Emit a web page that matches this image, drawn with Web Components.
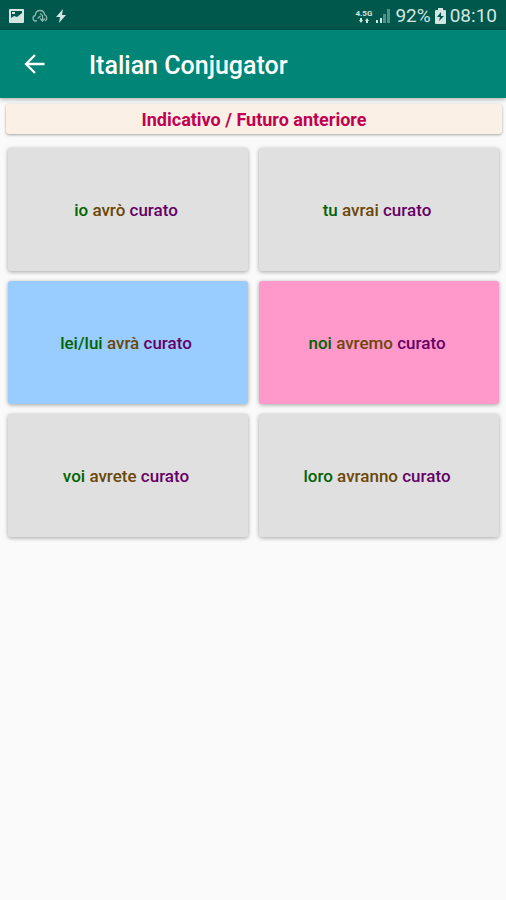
<!DOCTYPE html>
<html lang="en">
<head>
<meta charset="utf-8">
<meta name="viewport" content="width=device-width, initial-scale=1">
<title>Italian Conjugator</title>
<style>
  body {
    margin: 0;
    background: #fafafa;
    font-family: Roboto, "Liberation Sans", sans-serif;
  }
</style>
</head>
<body>
<conjugator-app></conjugator-app>

<script>
// Attach an open shadow root and fill it in.
const render = (host, html) => {
  host.attachShadow({mode: "open"}).innerHTML = `
    <style>
    :host, * { box-sizing: border-box; }
    h1, h2 { margin: 0; }
    </style>
    ${html}
  `;
};

// Phone status bar:
class StatusBar extends HTMLElement {
  connectedCallback() {
    render(this, `
      <style>
      :host {
        display: flex;
        align-items: center;
        justify-content: space-between;
        height: 30px;
        padding: 2px 9px 0 8px;
        background: #00574b;
        color: #d3e6e2;
        font-size: 19px;
        line-height: 24px;
      }

      div { display: flex; align-items: center; }
      .left { gap: 7px; }
      .right { gap: 4px; }
      svg { display: block; fill: currentColor; }

      .network {
        display: flex;
        flex-direction: column;
        align-items: center;
        font-size: 8px;
        font-weight: 700;
        line-height: 8px;
      }
      </style>

      <div class="left">
        <svg width="17" height="16" viewBox="0 0 17 16">
          <path fill-rule="evenodd" d="M2 1h13q1 0 1 1v12q0 1-1 1H2q-1 0-1-1V2q0-1 1-1zM3 3v7l3-2 3 1 5-4V3z"/>
          <path d="M4 4h3v2H4z"/>
        </svg>
        <svg width="16" height="14" viewBox="0 0 16 14" style="fill: none; stroke: #8bb7b0; stroke-width: 1.3">
          <path d="M5 12H3.500a2.800 2.800 0 0 1-.3-5.500C3.500 3 5.500 1.500 8 1.500s4.300 1.700 4.500 4.200c3 1 3 5.500.5 6.300"/>
          <path d="M5.500 9.500 8.500 7M8 4.500l2.500 2v5M8 9.500l2.500 2.500L13 9.500"/>
        </svg>
        <svg width="12" height="16" viewBox="0 0 12 16"><path d="M8 1 1 9h4l-1 6 7-8H7z"/></svg>
      </div>

      <div class="right">
        <span class="network">4.5G
          <svg width="10" height="5" viewBox="0 0 10 5"><path d="M0 2h1V0h2v2h1L2 5zM6 3h1v2h2V3h1L8 0z"/></svg>
        </span>
        <svg width="15" height="16" viewBox="0 0 15 16">
          <path d="M0 12h2v3H0zM4 10h2v5H4z"/>
          <path opacity=".4" d="M7 6h3v9H7zM11 1h3v14h-3z"/>
        </svg>
        <span>92%</span>
        <svg width="11" height="16" viewBox="0 0 11 16">
          <path fill-rule="evenodd" d="M3 0h5v2h2q1 0 1 1v12q0 1-1 1H1q-1 0-1-1V3q0-1 1-1h2zM6 4 2 9h3l-1 4 5-5H6z"/>
        </svg>
        <time>08:10</time>
      </div>
    `);
  }
}

// Toolbar with the back arrow, the title is slotted:
class AppBar extends HTMLElement {
  connectedCallback() {
    render(this, `
      <style>
      :host {
        display: flex;
        align-items: center;
        gap: 38px;
        height: 68px;
        padding: 0 19px;
        background: #008577;
        color: #fff;
        box-shadow: 0 1px 5px rgba(0, 0, 0, 0.35);
      }

      button {
        display: flex;
        padding: 4px;
        border: none;
        background: none;
        color: inherit;
      }

      svg { fill: none; stroke: currentColor; stroke-width: 2.300; }

      h1 {
        font-size: 25px;
        font-weight: 500;
        line-height: 32px;
        padding-top: 3px;
      }
      </style>

      <button type="button" aria-label="Back">
        <svg width="24" height="24" viewBox="0 0 24 24"><path d="M21.500 12H3M12 3 3 12l9 9"/></svg>
      </button>
      <h1><slot></slot></h1>
    `);
  }
}

// Mood and tense:
class TenseBanner extends HTMLElement {
  connectedCallback() {
    render(this, `
      <style>
      :host {
        display: block;
        margin: 6px 4px 0 6px;
        padding: 4px 3px 2px;
        border-radius: 3px;
        background: #faf0e6;
        color: #c2004f;
        box-shadow: 0 1px 3px rgba(0, 0, 0, 0.35);
        text-align: center;
      }

      h2 { font-size: 18px; font-weight: 700; line-height: 24px; }
      </style>

      <h2><slot></slot></h2>
    `);
  }
}

// One person of the verb: pronoun, auxiliary and participle.
class VerbCard extends HTMLElement {
  connectedCallback() {
    render(this, `
      <style>
      :host { display: block; }

      button {
        display: block;
        width: 100%;
        height: 123px;
        padding: 0 4px 0 0;
        border: none;
        border-radius: 3px;
        background: var(--card, #e0e0e0);
        box-shadow: 0 1px 4px rgba(0, 0, 0, 0.35);
        font: 500 17px/24px Roboto, "Liberation Sans", sans-serif;
        text-align: center;
      }

      .pronoun { color: #006400; }
      .auxiliary { color: #6b4708; }
      .participle { color: #660066; }
      </style>

      <button type="button">
        <span class="pronoun">${this.getAttribute("pronoun")}</span>
        <span class="auxiliary">${this.getAttribute("auxiliary")}</span>
        <span class="participle"><slot></slot></span>
      </button>
    `);
  }
}

// The whole screen:
class ConjugatorApp extends HTMLElement {
  connectedCallback() {
    render(this, `
      <style>
      :host { display: block; }

      main {
        display: grid;
        grid-template-columns: 1fr 1fr;
        gap: 10px 11px;
        padding: 14px 7px 14px 8px;
      }

      .blue { --card: #99ccff; }
      .pink { --card: #ff99cc; }
      </style>

      <status-bar></status-bar>
      <app-bar>Italian Conjugator</app-bar>
      <tense-banner>Indicativo / Futuro anteriore</tense-banner>
      <main>
        <verb-card pronoun="io" auxiliary="avrò">curato</verb-card>
        <verb-card pronoun="tu" auxiliary="avrai">curato</verb-card>
        <verb-card class="blue" pronoun="lei/lui" auxiliary="avrà">curato</verb-card>
        <verb-card class="pink" pronoun="noi" auxiliary="avremo">curato</verb-card>
        <verb-card pronoun="voi" auxiliary="avrete">curato</verb-card>
        <verb-card pronoun="loro" auxiliary="avranno">curato</verb-card>
      </main>
    `);
  }
}

// Register the custom elements:
customElements.define("status-bar", StatusBar);
customElements.define("app-bar", AppBar);
customElements.define("tense-banner", TenseBanner);
customElements.define("verb-card", VerbCard);
customElements.define("conjugator-app", ConjugatorApp);
</script>
</body>
</html>
